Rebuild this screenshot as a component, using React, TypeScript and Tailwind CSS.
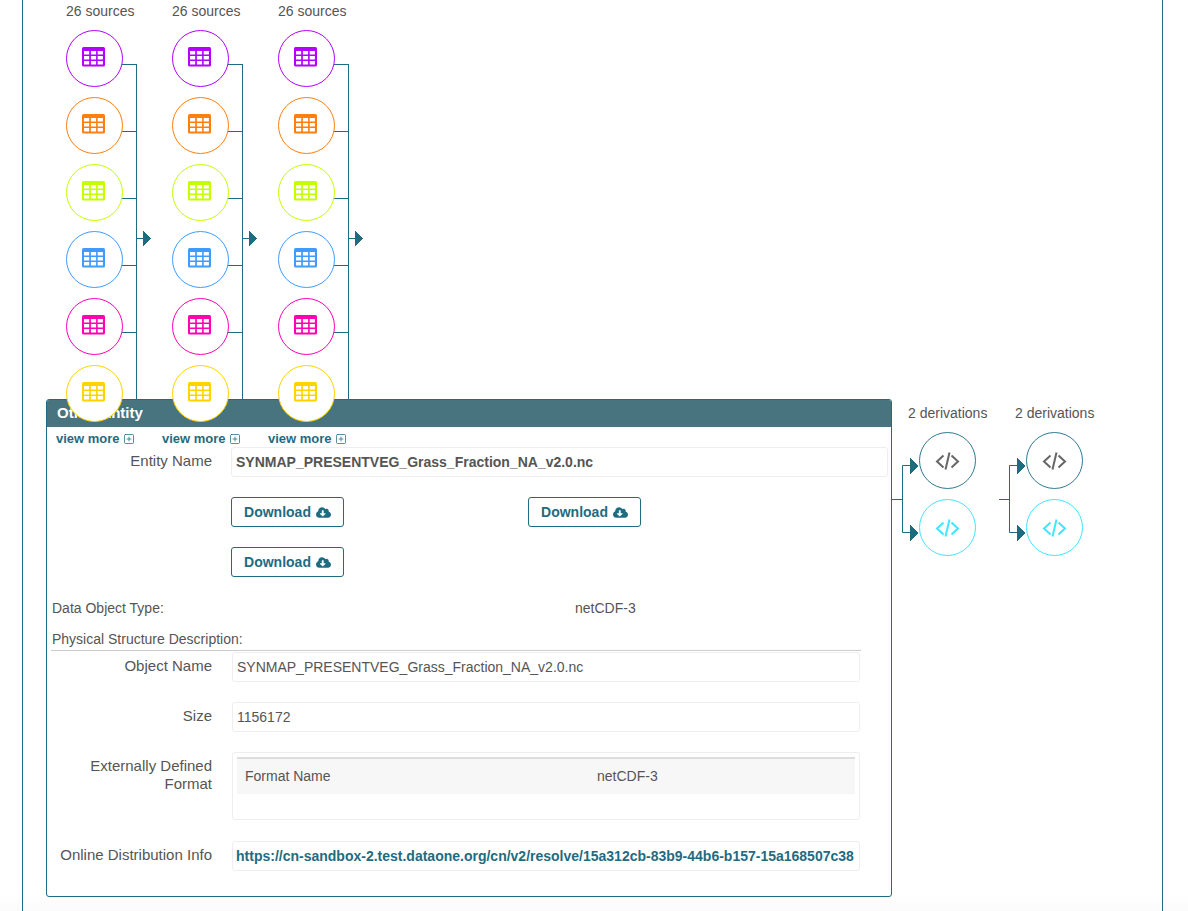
import { FaCloudDownloadAlt } from 'react-icons/fa';
import { SquarePlus } from 'lucide-react';

const sourceColors = ['#b300ff', '#ff7f0e', '#c4ff00', '#3f9bff', '#ff00b4', '#ffd400'];
const sourceCols = [66, 172, 278];
const derivationCols = [908, 1015];

function TableIcon({ color }: { color: string }) {
  const xs = [2, 8.9, 15.7];
  const ys = [4, 9, 14];
  return (
    <svg className="mb-[3px] mr-[2px]" width="23" height="20" viewBox="0 0 23 20">
      <rect width="23" height="19.6" rx="1.6" fill={color} />
      {ys.map((y) =>
        xs.map((x) => <rect key={`${x}-${y}`} x={x} y={y} width="5.2" height="3.5" fill="#fff" />),
      )}
    </svg>
  );
}

function CodeIcon({ color }: { color: string }) {
  return (
    <svg width="25" height="18" viewBox="0 0 25 18" fill="none" stroke={color} strokeWidth="2">
      <polyline points="8.5,3.5 2,9.5 8.5,15.5" />
      <polyline points="16.5,3.5 23,9.5 16.5,15.5" />
      <line x1="14.5" y1="0.5" x2="10.5" y2="17.5" />
    </svg>
  );
}

// connector lines of the provenance diagram, they run behind the panel
function Connectors() {
  const stroke = '#1f6b80';
  const rows = [64, 131, 198, 265, 332, 399];
  return (
    <svg className="absolute left-0 top-0" width="1188" height="911" fill="none" stroke={stroke}>
      {sourceCols.map((x) => (
        <g key={x}>
          <line x1={x + 70.5} y1="64" x2={x + 70.5} y2="400" />
          {rows.map((y) => (
            <line key={y} x1={x + 56} y1={y + 0.5} x2={x + 70} y2={y + 0.5} />
          ))}
          <line x1={x + 70} y1="238.5" x2={x + 78} y2="238.5" />
          <polygon
            points={`${x + 77},231 ${x + 85},238.5 ${x + 77},246`}
            fill={stroke}
            stroke="none"
            shapeRendering="crispEdges"
          />
        </g>
      ))}
      {[891, 999].map((x, i) => {
        const v = i === 0 ? 902.5 : 1009.5;
        return (
          <g key={x}>
            <line x1={x} y1="499.5" x2={v} y2="499.5" />
            <line x1={v} y1="465.5" x2={v} y2="532.5" />
            <line x1={v} y1="465.5" x2={v + 9} y2="465.5" />
            <line x1={v} y1="532.5" x2={v + 9} y2="532.5" />
            <polygon
              points={`${v + 7.5},458 ${v + 16},466 ${v + 7.5},474`}
              fill={stroke}
              stroke="none"
              shapeRendering="crispEdges"
            />
            <polygon
              points={`${v + 7.5},525 ${v + 16},533 ${v + 7.5},541`}
              fill={stroke}
              stroke="none"
              shapeRendering="crispEdges"
            />
          </g>
        );
      })}
    </svg>
  );
}

function SourceColumn({ left }: { left: number }) {
  return (
    <div className="absolute top-0 z-20 w-[80px]" style={{ left }}>
      <p className="h-[30px] pt-[3px] text-[14px] leading-[16px] text-[#555]">26 sources</p>
      <div className="flex flex-col gap-[10px]">
        {sourceColors.map((c) => (
          <div
            key={c}
            className="flex h-[57px] w-[57px] items-center justify-center rounded-full border bg-white"
            style={{ borderColor: c }}
          >
            <TableIcon color={c} />
          </div>
        ))}
      </div>
      <p className="ml-[-10px] mt-[9px] flex items-center gap-[3px] whitespace-nowrap text-[13px] font-bold leading-[16px] text-[#1f6b80]">
        view more <SquarePlus size={12} strokeWidth={1.5} />
      </p>
    </div>
  );
}

function DerivationColumn({ left }: { left: number }) {
  return (
    <div className="absolute top-[405px] z-20 w-[90px]" style={{ left }}>
      <p className="h-[27px] text-[14px] leading-[16px] text-[#555]">2 derivations</p>
      <div className="ml-[11px] flex flex-col gap-[10px]">
        <div className="flex h-[57px] w-[57px] items-center justify-center rounded-full border border-[#2f7a8f] bg-white">
          <CodeIcon color="#666" />
        </div>
        <div className="flex h-[57px] w-[57px] items-center justify-center rounded-full border border-[#3fe6ff] bg-white">
          <CodeIcon color="#3fe6ff" />
        </div>
      </div>
    </div>
  );
}

function DownloadButton() {
  return (
    <button className="flex h-[30px] w-[113px] items-center justify-center gap-[5px] rounded-[3px] border border-[#1f6b80] bg-white text-[14px] font-bold text-[#1f6b80]">
      Download <FaCloudDownloadAlt size={15} />
    </button>
  );
}

function Field({ label, children, className }: { label: React.ReactNode; children: React.ReactNode; className: string }) {
  return (
    <div className={`flex ${className}`}>
      <div className="w-[165px] pt-[5px] text-right text-[15px] leading-[18px] text-[#555]">{label}</div>
      <div className="ml-[20px] w-[628px]">{children}</div>
    </div>
  );
}

const boxClass = 'h-[30px] rounded-[3px] border border-[#eee] px-[4px] text-[14px] leading-[28px] text-[#555]';

function EntityPanel() {
  return (
    <section className="relative z-10 ml-[23px] h-[498px] w-[846px] rounded-[3px] border border-[#1f6b80] bg-white">
      <h2 className="h-[27px] rounded-t-[2px] bg-[#47747f] pl-[10px] text-[15px] font-bold leading-[26px] text-white">
        Other Entity
      </h2>
      <div className="mt-[20px] flex">
        <div className="w-[165px] pt-[5px] text-right text-[15px] leading-[18px] text-[#555]">Entity Name</div>
        <div className="ml-[19px] h-[30px] w-[657px] rounded-[3px] border border-[#eee] pl-[4px] text-[14px] font-bold leading-[28px] text-[#555]">
          SYNMAP_PRESENTVEG_Grass_Fraction_NA_v2.0.nc
        </div>
      </div>
      <div className="ml-[184px] mt-[20px] grid w-[410px] grid-cols-[297px_113px] gap-y-[20px]">
        <DownloadButton />
        <DownloadButton />
        <DownloadButton />
      </div>
      <div className="mt-[23px] flex pl-[5px] text-[14px] leading-[16px] text-[#555]">
        <span className="w-[523px]">Data Object Type:</span>
        <span>netCDF-3</span>
      </div>
      <p className="mt-[15px] pl-[5px] text-[14px] leading-[16px] text-[#555]">Physical Structure Description:</p>
      <div className="ml-[4px] mt-[3px] h-0 w-[810px] border-t border-[#ccc]" />
      <Field label="Object Name" className="mt-[1px]">
        <div className={boxClass}>SYNMAP_PRESENTVEG_Grass_Fraction_NA_v2.0.nc</div>
      </Field>
      <Field label="Size" className="mt-[20px]">
        <div className={boxClass}>1156172</div>
      </Field>
      <Field
        label={
          <>
            Externally Defined
            <br />
            Format
          </>
        }
        className="mt-[20px]"
      >
        <div className="h-[68px] rounded-[3px] border border-[#eee] px-[4px] pt-[4px]">
          <div className="flex h-[37px] items-center border-t-2 border-[#ddd] bg-[#f7f7f7] pl-[8px] text-[14px] text-[#555]">
            <span className="w-[352px]">Format Name</span>
            <span>netCDF-3</span>
          </div>
        </div>
      </Field>
      <Field label="Online Distribution Info" className="mt-[21px]">
        <div className="h-[30px] whitespace-nowrap rounded-[3px] border border-[#eee] pl-[3px] text-[14px] font-bold leading-[28px] text-[#1f6b80]">
          https://cn-sandbox-2.test.dataone.org/cn/v2/resolve/15a312cb-83b9-44b6-b157-15a168507c38
        </div>
      </Field>
    </section>
  );
}

export default function App() {
  return (
    <div className="relative h-[911px] w-full overflow-hidden bg-white font-['Liberation_Sans',Arial,sans-serif]">
      <div className="absolute inset-x-0 bottom-0 h-[18px] bg-linear-to-b from-white to-[#fbfbfb]" />
      <Connectors />
      <div className="relative ml-[22px] h-[911px] w-[1141px] border-x border-[#1f6b80] pt-[399px]">
        <EntityPanel />
      </div>
      {sourceCols.map((x) => (
        <SourceColumn key={x} left={x} />
      ))}
      {derivationCols.map((x) => (
        <DerivationColumn key={x} left={x} />
      ))}
    </div>
  );
}
